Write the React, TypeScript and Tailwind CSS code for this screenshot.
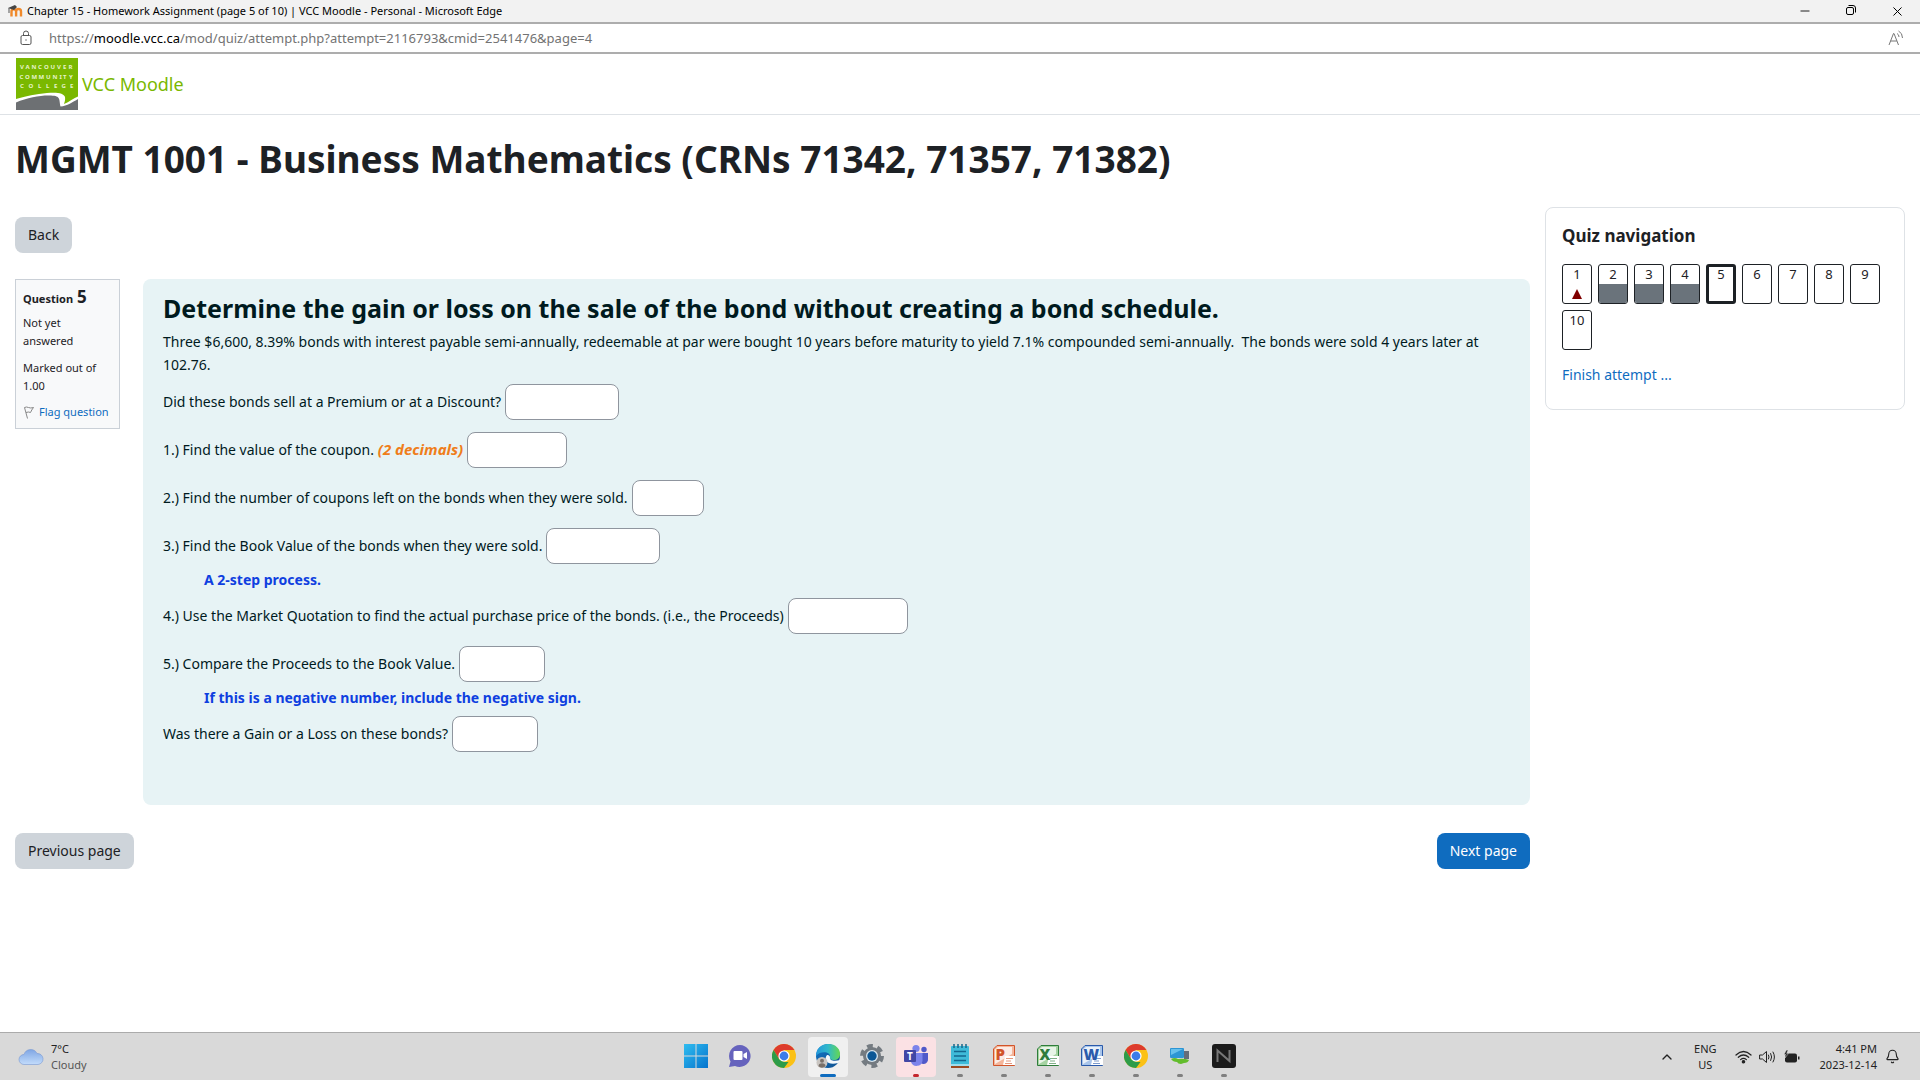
import React, { useState } from 'react';
import { Minus, X, ChevronUp, Bell } from 'lucide-react';
import clsx from 'clsx';

interface QuizSlot {
    number: number;
    status: 'invalid' | 'answered' | 'current' | 'empty';
}

interface Prompt {
    id: string;
    text: string;
    emphasis?: string;
    width: string;
    hint?: string;
}

const slots: QuizSlot[] = [
    { number: 1, status: 'invalid' },
    { number: 2, status: 'answered' },
    { number: 3, status: 'answered' },
    { number: 4, status: 'answered' },
    { number: 5, status: 'current' },
    { number: 6, status: 'empty' },
    { number: 7, status: 'empty' },
    { number: 8, status: 'empty' },
    { number: 9, status: 'empty' },
    { number: 10, status: 'empty' },
];

const prompts: Prompt[] = [
    { id: 'premium', text: 'Did these bonds sell at a Premium or at a Discount?', width: 'w-[114px]' },
    { id: 'coupon', text: '1.) Find the value of the coupon.', emphasis: '(2 decimals)', width: 'w-[100px]' },
    { id: 'left', text: '2.) Find the number of coupons left on the bonds when they were sold.', width: 'w-[72px]' },
    { id: 'book', text: '3.) Find the Book Value of the bonds when they were sold.', width: 'w-[114px]', hint: 'A 2-step process.' },
    { id: 'proceeds', text: '4.) Use the Market Quotation to find the actual purchase price of the bonds. (i.e., the Proceeds)', width: 'w-[120px]' },
    { id: 'compare', text: '5.) Compare the Proceeds to the Book Value.', width: 'w-[86px]', hint: 'If this is a negative number, include the negative sign.' },
    { id: 'gain', text: 'Was there a Gain or a Loss on these bonds?', width: 'w-[86px]' },
];

const TitleBar = () => (
    <div className="flex h-6 items-center justify-between border-b-2 border-[#adadad] bg-[#f2f2f2] pl-2 text-[11px] text-black">
        <div className="flex items-center gap-1">
            <svg width="15" height="14" viewBox="0 0 15 14">
                <path d="M3.500 12.500V7.500a2.200 2.200 0 0 1 4.600 0v5M8.100 12.500V7.500a2.200 2.200 0 0 1 4.900 0v5" fill="none" stroke="#f08a2c" strokeWidth="2.400" />
                <path d="M0 4 7 1l2 2-3 3-3-1z" fill="#444" />
                <path d="M1 4v5" stroke="#555" />
            </svg>
            <span className="leading-[22px]">Chapter 15 - Homework Assignment (page 5 of 10) | VCC Moodle - Personal - Microsoft Edge</span>
        </div>
        <div className="flex">
            <button aria-label="Minimize" className="flex w-[46px] justify-center"><Minus size={14} strokeWidth={1.5} /></button>
            <button aria-label="Restore" className="flex w-[46px] justify-center">
                <svg width="12" height="12" viewBox="0 0 12 12" fill="none" stroke="currentColor">
                    <rect x="1.5" y="3.5" width="7" height="7" rx="1.5" />
                    <path d="M3.5 1.5H8A2.5 2.5 0 0 1 10.5 4v4.5" />
                </svg>
            </button>
            <button aria-label="Close" className="flex w-[46px] justify-center"><X size={15} strokeWidth={1.6} /></button>
        </div>
    </div>
);

const AddressBar = () => (
    <div className="flex h-[30px] items-center border-b-2 border-[#adadad] bg-white pr-4 pl-5 text-[13px] text-[#737373]">
        <svg width="12" height="16" viewBox="0 0 12 16" fill="none" stroke="#555">
            <rect x="1" y="5.5" width="10" height="9" rx="1.5" />
            <path d="M3.5 5.5V3.5a2.5 2.5 0 0 1 5 0v2" />
            <circle cx="6" cy="10" r="0.7" fill="#555" stroke="none" />
        </svg>
        <span className="ml-[17px] flex-1 pt-px">
            https://<span className="text-black">moodle.vcc.ca</span>/mod/quiz/attempt.php?attempt=2116793&amp;cmid=2541476&amp;page=4
        </span>
        <button aria-label="Read aloud">
            <svg width="16" height="16" viewBox="0 0 16 16" fill="none" stroke="#777">
                <path d="M1 15 5.500 3.500h.5L10.500 15M2.600 11h6.200M9 3.500q2 1 2 3.500M10.500 1q4 2 4 7" />
            </svg>
        </button>
    </div>
);

const CollegeLogo = () => (
    <svg width="62" height="52" viewBox="0 0 62 52" role="img" aria-label="Vancouver Community College">
        <rect width="62" height="52" fill="#7ab800" />
        <g fill="#e6f3c8" fontSize="6" fontWeight="700">
            <text x="4 9.500 15.500 22 28 34.500 41 47 52.500" y="11">VANCOUVER</text>
            <text x="3.500 9 15.500 22.500 30 36.500 43.500 47 53" y="20.500">COMMUNITY</text>
            <text x="4 12.500 22 30 38 45.500 54" y="30">COLLEGE</text>
        </g>
        <path d="M0 41C10 38 20 36 31 35c10-1 17 0 18 4 .5 3-.5 5-1 7 5-2 10-6 14-7.500V52H0z" fill="#fff" />
        <path d="M0 44.500C12 39 26 37 35 37.500c10 .5 8 4 9.500 11C51 48 57 44 62 41v11H0z" fill="#6d7073" />
    </svg>
);

const QuestionInfo = () => (
    <div className="w-[105px] shrink-0 self-start border border-[#cad0d7] bg-[#f8f9fa] px-[7px] pt-[3px] pb-[7px] text-[11px] leading-[18px]">
        <h3 className="flex items-baseline gap-1 font-bold leading-7">
            Question <span className="text-[17px] leading-7">5</span>
        </h3>
        <div className="mt-px">Not yet answered</div>
        <div className="mt-[9px]">Marked out of 1.00</div>
        <a href="#flag" className="mt-2 flex items-center gap-1 whitespace-nowrap text-[#0f6cbf]">
            <svg width="12" height="13" viewBox="0 0 12 13" fill="none" stroke="#888">
                <path d="M1.500 1.500 4.500 12.500M1.500 1.500q2-1 4 0t5 0Q8.500 4 7.500 6.500 5.500 5.500 3 6.500" />
            </svg>
            Flag question
        </a>
    </div>
);

const QuizNavigation = () => (
    <aside className="w-[360px] shrink-0 self-start rounded-lg border border-[#dee2e6] px-4 pt-4 pb-[23px]">
        <h2 className="text-[17px] leading-6 font-bold">Quiz navigation</h2>
        <nav className="mt-4 flex flex-wrap gap-[6px]">
            {slots.map((slot) => (
                <a
                    key={slot.number}
                    href={`#q${slot.number}`}
                    className={clsx(
                        'flex h-10 w-[30px] flex-col items-center overflow-hidden rounded-[3px] text-[13px]',
                        slot.status === 'current' ? 'border-[3px] border-[#1d2125]' : 'border border-[#1d2125]'
                    )}
                >
                    <span className={clsx('h-[19px] shrink-0', slot.status === 'current' ? 'leading-[15px]' : 'leading-[19px]')}>{slot.number}</span>
                    {slot.status === 'answered' && <span className="w-full flex-1 bg-[#6a737b]" />}
                    {slot.status === 'invalid' && (
                        <svg width="10" height="10" viewBox="0 0 10 10" className="mt-[5px]"><path d="M5 0 10 10H0z" fill="#800000" /></svg>
                    )}
                </a>
            ))}
        </nav>
        <a href="#finish" className="mt-[14px] block leading-[22px] text-[#0f6cbf]">Finish attempt ...</a>
    </aside>
);

const ChromeIcon = () => (
    <svg width="24" height="24" viewBox="0 0 24 24">
        <circle cx="12" cy="12" r="12" fill="#fbc116" />
        <path d="M1.600 6A12 12 0 0 1 22.400 6H12L7 15z" fill="#dd3b2d" />
        <path d="M1.600 6 7 15l5 3h4.500L12 24A12 12 0 0 1 1.600 6z" fill="#2d9c49" />
        <circle cx="12" cy="12" r="5.600" fill="#fff" />
        <circle cx="12" cy="12" r="4.400" fill="#3c7ce8" />
    </svg>
);

const OfficeIcon = ({ letter, color, light }: { letter: string; color: string; light: string }) => (
    <svg width="24" height="24" viewBox="0 0 24 24">
        <path d="M5 1.500h17.500v20H1.500V5z" fill={light} stroke={color} />
        <path d="M3 5.500 6 3h14v7L3 20z" fill="#fff" opacity=".75" />
        <path d="M13 12h10v9H11z" fill="#fff" />
        <path d="M14 14.500h7M14 17h5M13 19.500h7" stroke={color} opacity=".6" />
        <text x="3.500" y="16" fill={color} fontSize="15" fontWeight="900">{letter}</text>
    </svg>
);

const icons = {
    start: (
        <svg width="24" height="24" viewBox="0 0 24 24">
            <defs><linearGradient id="win" x1="0" y1="0" x2="1" y2="1"><stop stopColor="#2fbdf0" /><stop offset="1" stopColor="#0573cd" /></linearGradient></defs>
            <path d="M0 0h11.500v11.500H0zM12.500 0H24v11.500H12.500zM0 12.500h11.500V24H0zM12.500 12.500H24V24H12.500z" fill="url(#win)" />
        </svg>
    ),
    chat: (
        <svg width="24" height="24" viewBox="0 0 24 24">
            <path d="M12 1a11 11 0 1 1-5 21l-6 1 1.500-5.500A11 11 0 0 1 12 1z" fill="#6663bd" />
            <rect x="5.500" y="7" width="9" height="9" rx="1" fill="#fff" />
            <path d="m15.500 10 3.500-2v7l-3.500-2z" fill="#fff" />
        </svg>
    ),
    chrome: <ChromeIcon />,
    edge: (
        <svg width="26" height="26" viewBox="0 0 26 26">
            <defs>
                <linearGradient id="edgeTop"><stop stopColor="#2497dc" /><stop offset=".5" stopColor="#30b9ca" /><stop offset="1" stopColor="#66d84f" /></linearGradient>
                <linearGradient id="edgeLow" x1="0" y1="0" x2="1" y2="1"><stop stopColor="#1277c8" /><stop offset="1" stopColor="#10508e" /></linearGradient>
            </defs>
            <circle cx="13" cy="13" r="12" fill="url(#edgeLow)" />
            <path d="M1 13C1 5 7 1 13 1c8 0 12 5 12 10 0 4-3 6-6 6s-5-1-4-3c1-5-9-7-14-1z" fill="url(#edgeTop)" />
            <path d="M12 12c-4 5 1 11 11 8 2-2 2-3 2-3-5 1.500-11 1-10-3 0-1-1.500-2.500-3-2z" fill="#f3f8fc" />
            <circle cx="7" cy="19.500" r="5.500" fill="#c9c5c1" />
            <circle cx="7" cy="17.800" r="2" fill="#7a7068" />
            <path d="M3.500 23.200q0-3 3.500-3t3.500 3A5.500 5.500 0 0 1 3.500 23.200z" fill="#7a7068" />
        </svg>
    ),
    settings: (
        <svg width="24" height="24" viewBox="0 0 24 24">
            <circle cx="12" cy="12" r="9" fill="#747b81" />
            <circle cx="12" cy="12" r="9.500" fill="none" stroke="#747b81" strokeWidth="5" strokeDasharray="5.460 4.488" />
            <circle cx="12" cy="12" r="6" fill="#d8e6ef" />
            <circle cx="12" cy="12" r="4.700" fill="#0c5795" />
        </svg>
    ),
    teams: (
        <svg width="26" height="24" viewBox="0 0 26 24">
            <circle cx="21" cy="5.500" r="2.700" fill="#5059c9" />
            <path d="M16 9h9v6a4.500 4.500 0 0 1-9 1z" fill="#5059c9" />
            <circle cx="13" cy="4.500" r="3.600" fill="#7b83eb" />
            <path d="M8 9h11.500v8a6 6 0 0 1-11.500 1z" fill="#7b83eb" />
            <rect x="1" y="6" width="12" height="12" rx="1" fill="#4147a5" />
            <text x="4" y="16" fill="#fff" fontSize="10" fontWeight="700">T</text>
        </svg>
    ),
    notepad: (
        <svg width="20" height="26" viewBox="0 0 20 26">
            <rect x="1" y="3" width="18" height="21" rx="1" fill="#3fbbd9" />
            <path d="M4 1v4M8 1v4M12 1v4M16 1v4" stroke="#17678b" strokeWidth="1.500" />
            <path d="M4 8.500h12M4 13h12M4 17.500h12" stroke="#14688f" strokeWidth="1.600" />
            <path d="M1 22h18" stroke="#fff" />
            <path d="M1 24h18" stroke="#9c4a22" strokeWidth="2" />
        </svg>
    ),
    powerpoint: <OfficeIcon letter="P" color="#d2542a" light="#f4b59a" />,
    excel: <OfficeIcon letter="X" color="#2f7d3c" light="#a5d3a2" />,
    word: <OfficeIcon letter="W" color="#2a5aab" light="#a9c5ea" />,
    remote: (
        <svg width="22" height="20" viewBox="0 0 22 20">
            <rect x="1" y="2" width="14" height="10" rx="1" fill="#2c95d4" />
            <path d="M2 3h12L2 9z" fill="#66c0ec" />
            <rect x="15" y="5" width="5" height="8" fill="#666d78" />
            <path d="M2 13q4-2 7 0 6-1 11 1-1 3-5 3l-3 1q-3 0-4-2-4 0-6-3z" fill="#63bd2c" />
        </svg>
    ),
    nvivo: (
        <svg width="24" height="24" viewBox="0 0 24 24">
            <rect width="24" height="24" rx="3" fill="#1b1b1b" />
            <path d="M5.500 18V6.500l12 10.500V6" fill="none" stroke="#777" strokeWidth="2" />
        </svg>
    ),
};

const taskbarApps: { name: string; icon: React.ReactNode; state?: 'active' | 'alert' | 'open' }[] = [
    { name: 'Start', icon: icons.start },
    { name: 'Chat', icon: icons.chat },
    { name: 'Chrome', icon: icons.chrome },
    { name: 'Edge', icon: icons.edge, state: 'active' },
    { name: 'Settings', icon: icons.settings },
    { name: 'Teams', icon: icons.teams, state: 'alert' },
    { name: 'Notepad', icon: icons.notepad, state: 'open' },
    { name: 'PowerPoint', icon: icons.powerpoint, state: 'open' },
    { name: 'Excel', icon: icons.excel, state: 'open' },
    { name: 'Word', icon: icons.word, state: 'open' },
    { name: 'Chrome profile', icon: icons.chrome, state: 'open' },
    { name: 'Remote desktop', icon: icons.remote, state: 'open' },
    { name: 'N', icon: icons.nvivo, state: 'open' },
];

const Taskbar = () => (
    <footer className="grid h-12 grid-cols-[1fr_auto_1fr] items-center border-t border-[#ababab] bg-[#d9d9d9] text-[11px] leading-4 text-[#222]">
        <div className="flex items-center gap-[7px] pl-[18px]">
            <svg width="26" height="18" viewBox="0 0 26 18">
                <defs><linearGradient id="cloud" x1="0" y1="0" x2="0" y2="1"><stop stopColor="#7fa6e4" /><stop offset="1" stopColor="#c3dcfb" /></linearGradient></defs>
                <path d="M6 16.500a5 5 0 0 1 0-10 7 7 0 0 1 13-1 5.500 5.500 0 0 1 1 11z" fill="url(#cloud)" stroke="#7899d2" strokeWidth=".6" />
            </svg>
            <div>
                <div>7°C</div>
                <div className="text-[#555]">Cloudy</div>
            </div>
        </div>
        <div className="flex gap-1">
            {taskbarApps.map((app) => (
                <button
                    key={app.name}
                    aria-label={app.name}
                    className={clsx(
                        'relative flex h-10 w-10 items-center justify-center rounded pb-[2px]',
                        app.state === 'active' && 'bg-[#f0f0f0]',
                        app.state === 'alert' && 'bg-[#fbe1e4]'
                    )}
                >
                    {app.icon}
                    {app.state && (
                        <span
                            className={clsx(
                                'absolute bottom-0 h-[3px] rounded-full',
                                app.state === 'active' && 'w-4 bg-[#0f6cbf]',
                                app.state === 'alert' && 'w-[6px] bg-[#c4262e]',
                                app.state === 'open' && 'w-[6px] bg-[#808080]'
                            )}
                        />
                    )}
                </button>
            ))}
        </div>
        <div className="flex items-center justify-end pr-5">
            <button aria-label="Show hidden icons"><ChevronUp size={16} strokeWidth={2} /></button>
            <div className="ml-[19px] text-center">
                <div>ENG</div>
                <div>US</div>
            </div>
            <div className="ml-[18px] flex items-center gap-[7px]">
                <svg width="17" height="14" viewBox="0 0 17 14" fill="none" stroke="#222" strokeWidth="1.200" strokeLinecap="round">
                    <path d="M1 5Q8.500-2 16 5M3.300 7.300q5.200-4.600 10.400 0M5.600 9.600q2.900-2.500 5.800 0" />
                    <circle cx="8.500" cy="11.800" r="1.200" fill="#222" />
                </svg>
                <svg width="17" height="14" viewBox="0 0 17 14" fill="none" stroke="#222" strokeLinecap="round" strokeLinejoin="round">
                    <path d="M1 5h2.500L7.500 1.500v11L3.500 9H1zM9.500 5q1.200 2 0 4M11.700 3.500q2 3.500 0 7M14 2q3 5 0 10" />
                </svg>
                <svg width="17" height="14" viewBox="0 0 17 14">
                    <rect x="2" y="3.500" width="12" height="9" rx="2" fill="#222" />
                    <path d="M15 6.500h1.500v3H15z" fill="#222" />
                    <path d="M3.500 0 1 4.500h2L2 8l3.500-4.500H3.700L5 0z" fill="#222" stroke="#d9d9d9" strokeWidth=".5" />
                </svg>
            </div>
            <div className="ml-5 text-right">
                <div>4:41 PM</div>
                <div>2023-12-14</div>
            </div>
            <button aria-label="Notifications" className="ml-2"><Bell size={15} strokeWidth={1.8} /></button>
        </div>
    </footer>
);

const App: React.FC = () => {
    const [answers, setAnswers] = useState<Record<string, string>>({});

    return (
        <div className="flex min-h-screen flex-col bg-white font-['Noto_Sans',sans-serif] text-[#1d2125]">
            <TitleBar />
            <AddressBar />

            {/* Site header */}
            <header className="flex h-[61px] items-center border-b border-[#dee2e6] px-4">
                <a href="#home" className="flex items-center gap-1 text-lg text-[#7ab800]">
                    <CollegeLogo />
                    VCC Moodle
                </a>
            </header>

            <div className="flex-1 px-[15px] text-sm">
                <h1 className="mt-5 text-[37px] leading-[48px] font-bold">MGMT 1001 - Business Mathematics (CRNs 71342, 71357, 71382)</h1>

                <div className="mt-6 flex gap-[15px]">
                    <main className="min-w-0 flex-1 pt-[10px]">
                        <button className="h-9 rounded-lg bg-[#ced4da] px-[13px]">Back</button>

                        <div className="mt-[26px] flex gap-[23px]">
                            <QuestionInfo />
                            <section className="flex-1 rounded-lg bg-[#e7f3f5] px-5 pt-[13px] pb-[41px] text-[#001a1e]">
                                <h2 className="text-[25px] leading-8 font-bold">Determine the gain or loss on the sale of the bond without creating a bond schedule.</h2>
                                <p className="mt-[6px] leading-[23px]">
                                    Three $6,600, 8.39% bonds with interest payable semi-annually, redeemable at par were bought 10 years before maturity to yield 7.1% compounded semi-annually.&nbsp; The bonds were sold 4 years later at 102.76.
                                </p>
                                <div className="mt-2">
                                    {prompts.map((prompt) => (
                                        <div key={prompt.id} className={prompt.hint ? '' : 'mb-3'}>
                                            <div className="flex items-center gap-1">
                                                <label htmlFor={prompt.id}>
                                                    {prompt.text}
                                                    {prompt.emphasis && <em className="text-[15px] font-bold text-[#ef7d1a]"> {prompt.emphasis}</em>}
                                                </label>
                                                <input
                                                    id={prompt.id}
                                                    type="text"
                                                    value={answers[prompt.id] ?? ''}
                                                    onChange={(e) => setAnswers({ ...answers, [prompt.id]: e.target.value })}
                                                    className={clsx('h-9 rounded-lg border border-[#8f959e] bg-white px-3', prompt.width)}
                                                />
                                            </div>
                                            {prompt.hint && <p className="pt-[5px] pb-[7px] pl-[41px] leading-[22px] font-bold text-[#0f3fe0]">{prompt.hint}</p>}
                                        </div>
                                    ))}
                                </div>
                            </section>
                        </div>

                        <div className="mt-7 flex justify-between">
                            <button className="h-9 rounded-lg bg-[#ced4da] px-[13px]">Previous page</button>
                            <button className="h-9 rounded-lg bg-[#0f6cbf] px-[13px] text-white">Next page</button>
                        </div>
                    </main>

                    <QuizNavigation />
                </div>
            </div>

            <Taskbar />
        </div>
    );
};

export default App;
